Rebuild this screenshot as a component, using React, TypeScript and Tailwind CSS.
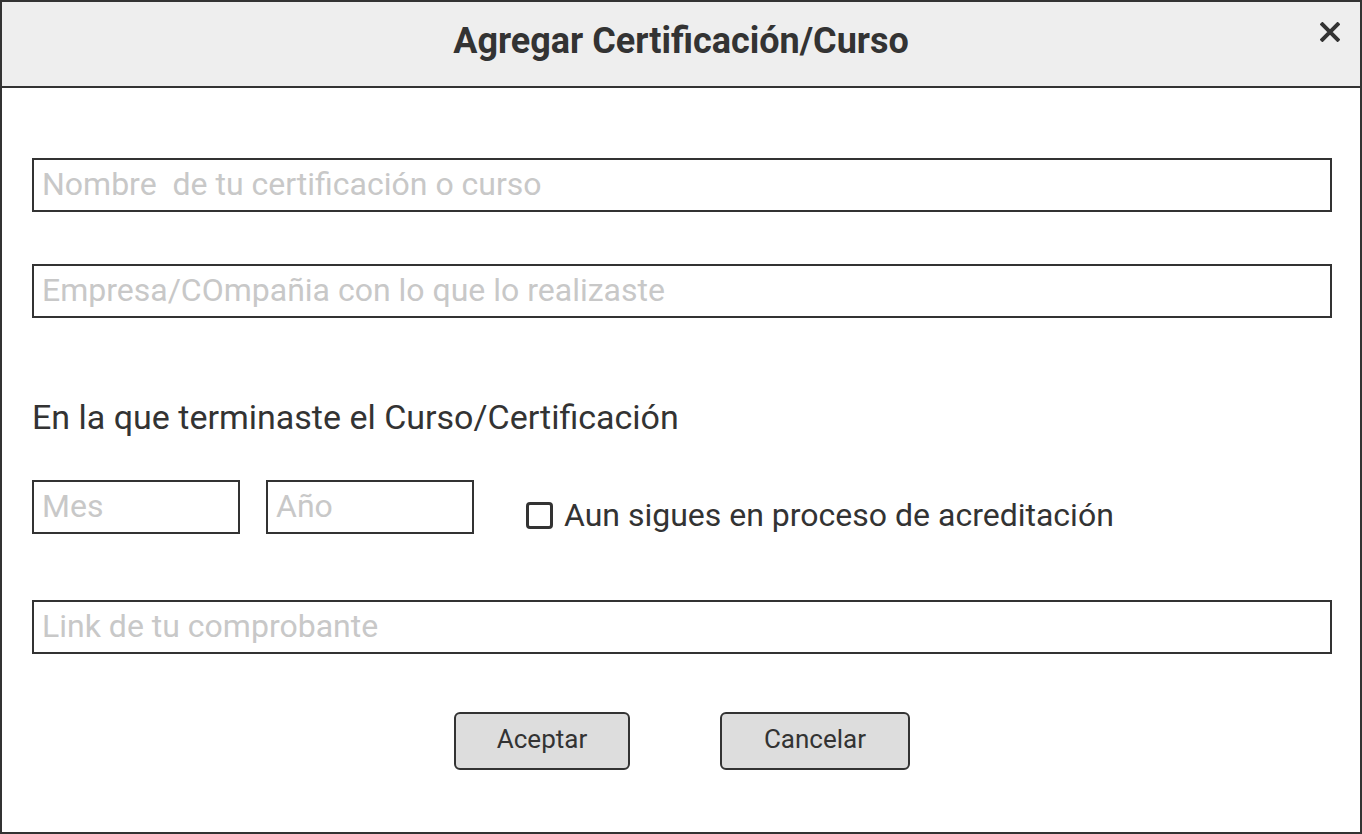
export default function App() {
  return (
    <div className="w-[1362px] h-[834px] border-2 border-[#333] bg-white flex flex-col font-['Roboto',sans-serif] text-[#333]">
      <div className="relative h-[86px] shrink-0 bg-[#eee] border-b-2 border-[#333] flex items-center justify-center">
        <h1 className="text-[36px] font-bold leading-none -mt-[6px]">Agregar Certificación/Curso</h1>
        <button className="absolute right-[20px] top-[20px] w-[20px] h-[20px]" aria-label="Cerrar">
          <svg viewBox="0 0 20 20" className="w-[20px] h-[20px]">
            <path d="M1 1 L19 19 M19 1 L1 19" stroke="#333" strokeWidth="4" strokeLinecap="butt" />
          </svg>
        </button>
      </div>

      <div className="pl-[30px] pr-[28px] flex flex-col">
        <input
          type="text"
          placeholder="Nombre  de tu certificación o curso"
          className="mt-[70px] h-[54px] w-full border-2 border-[#333] px-[8px] pb-[2px] text-[32px] font-['Roboto',sans-serif] placeholder:text-[#c8c8c8] outline-none"
        />
        <input
          type="text"
          placeholder="Empresa/COmpañia con lo que lo realizaste"
          className="mt-[52px] h-[54px] w-full border-2 border-[#333] px-[8px] pb-[2px] text-[32px] font-['Roboto',sans-serif] placeholder:text-[#c8c8c8] outline-none"
        />

        <p className="mt-[80px] text-[34px] leading-[38px]">En la que terminaste el Curso/Certificación</p>

        <div className="mt-[44px] flex items-start">
          <input
            type="text"
            placeholder="Mes"
            className="h-[54px] w-[208px] border-2 border-[#333] px-[8px] pb-[2px] text-[32px] font-['Roboto',sans-serif] placeholder:text-[#c8c8c8] outline-none"
          />
          <input
            type="text"
            placeholder="Año"
            className="ml-[26px] h-[54px] w-[208px] border-2 border-[#333] px-[8px] pb-[2px] text-[32px] font-['Roboto',sans-serif] placeholder:text-[#c8c8c8] outline-none"
          />
          <label className="ml-[52px] mt-[16px] flex items-center gap-[11px] cursor-pointer">
            <span className="w-[27px] h-[27px] border-[3px] border-[#333] rounded-[4px] bg-white" />
            <span className="text-[32px] leading-[38px]">Aun sigues en proceso de acreditación</span>
          </label>
        </div>

        <input
          type="text"
          placeholder="Link de tu comprobante"
          className="mt-[66px] h-[54px] w-full border-2 border-[#333] px-[8px] pb-[2px] text-[32px] font-['Roboto',sans-serif] placeholder:text-[#c8c8c8] outline-none"
        />

        <div className="mt-[58px] flex justify-center gap-[90px]">
          <button className="w-[176px] h-[58px] pb-[4px] bg-[#ddd] border-2 border-[#333] rounded-[6px] text-[26px] text-[#333]">
            Aceptar
          </button>
          <button className="w-[190px] h-[58px] pb-[4px] bg-[#ddd] border-2 border-[#333] rounded-[6px] text-[26px] text-[#333]">
            Cancelar
          </button>
        </div>
      </div>
    </div>
  );
}
